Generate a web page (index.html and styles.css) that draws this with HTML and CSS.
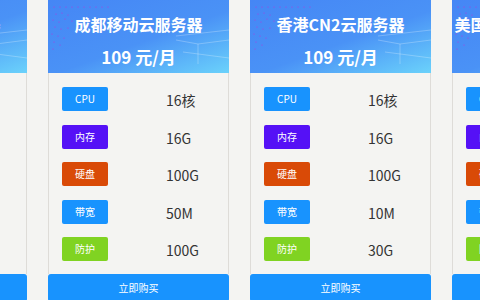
FILE: index.html
```html
<!DOCTYPE html>
<html lang="zh-CN">
<head>
    <meta charset="UTF-8">
    <meta name="viewport" content="width=device-width, initial-scale=1.0">
    <title>云服务器套餐</title>
    <link rel="stylesheet" href="styles.css">
</head>
<body>
    <div class="plans">
        <div class="plan">
            <div class="plan-head">
                <svg class="deco" width="181" height="73" viewBox="0 0 181 73">
                    <g fill="#b23be0">
                        <circle cx="6" cy="7" r="0.6"/><circle cx="12" cy="7" r="0.6"/><circle cx="18" cy="7" r="0.6"/><circle cx="24" cy="7" r="0.6"/><circle cx="30" cy="7" r="0.6"/><circle cx="36" cy="7" r="0.6"/><circle cx="42" cy="7" r="0.6"/><circle cx="48" cy="7" r="0.6"/><circle cx="54" cy="7" r="0.6"/><circle cx="60" cy="7" r="0.6"/>
                        <circle cx="8" cy="14" r="0.6"/><circle cx="14" cy="13" r="0.6"/><circle cx="20" cy="15" r="0.6"/><circle cx="5" cy="20" r="0.6"/><circle cx="11" cy="22" r="0.6"/><circle cx="17" cy="19" r="0.6"/><circle cx="24" cy="21" r="0.6"/><circle cx="7" cy="27" r="0.6"/><circle cx="13" cy="29" r="0.6"/><circle cx="20" cy="28" r="0.6"/><circle cx="4" cy="34" r="0.6"/><circle cx="10" cy="36" r="0.6"/><circle cx="16" cy="38" r="0.6"/><circle cx="6" cy="42" r="0.6"/><circle cx="12" cy="45" r="0.6"/><circle cx="5" cy="49" r="0.6"/>
                    </g>
                    <g stroke="#ffffff" stroke-opacity="0.25" stroke-width="1" fill="none">
                        <path d="M128 36 L181 30"/><path d="M128 40 L150 44 L181 40"/><path d="M135 52 L181 58"/><path d="M150 44 L150 64"/>
                    </g>
                </svg>
                <h2>西部高防云服务器</h2>
                <div class="price">99 元/月</div>
            </div>
            <div class="plan-body">
                <div class="spec"><span class="tag blue">CPU</span><span class="val">8核</span></div>
                <div class="spec"><span class="tag purple">内存</span><span class="val">8G</span></div>
                <div class="spec"><span class="tag orange">硬盘</span><span class="val">100G</span></div>
                <div class="spec"><span class="tag blue">带宽</span><span class="val">20M</span></div>
                <div class="spec"><span class="tag green">防护</span><span class="val">100G</span></div>
            </div>
            <a href="#" class="buy">立即购买</a>
        </div>

        <div class="plan">
            <div class="plan-head">
                <svg class="deco" width="181" height="73" viewBox="0 0 181 73">
                    <g fill="#b23be0">
                        <circle cx="6" cy="7" r="0.6"/><circle cx="12" cy="7" r="0.6"/><circle cx="18" cy="7" r="0.6"/><circle cx="24" cy="7" r="0.6"/><circle cx="30" cy="7" r="0.6"/><circle cx="36" cy="7" r="0.6"/><circle cx="42" cy="7" r="0.6"/><circle cx="48" cy="7" r="0.6"/><circle cx="54" cy="7" r="0.6"/><circle cx="60" cy="7" r="0.6"/>
                        <circle cx="8" cy="14" r="0.6"/><circle cx="14" cy="13" r="0.6"/><circle cx="20" cy="15" r="0.6"/><circle cx="5" cy="20" r="0.6"/><circle cx="11" cy="22" r="0.6"/><circle cx="17" cy="19" r="0.6"/><circle cx="24" cy="21" r="0.6"/><circle cx="7" cy="27" r="0.6"/><circle cx="13" cy="29" r="0.6"/><circle cx="20" cy="28" r="0.6"/><circle cx="4" cy="34" r="0.6"/><circle cx="10" cy="36" r="0.6"/><circle cx="16" cy="38" r="0.6"/><circle cx="6" cy="42" r="0.6"/><circle cx="12" cy="45" r="0.6"/><circle cx="5" cy="49" r="0.6"/>
                    </g>
                    <g stroke="#ffffff" stroke-opacity="0.25" stroke-width="1" fill="none">
                        <path d="M128 36 L181 30"/><path d="M128 40 L150 44 L181 40"/><path d="M135 52 L181 58"/><path d="M150 44 L150 64"/>
                    </g>
                </svg>
                <h2>成都移动云服务器</h2>
                <div class="price">109 元/月</div>
            </div>
            <div class="plan-body">
                <div class="spec"><span class="tag blue">CPU</span><span class="val">16核</span></div>
                <div class="spec"><span class="tag purple">内存</span><span class="val">16G</span></div>
                <div class="spec"><span class="tag orange">硬盘</span><span class="val">100G</span></div>
                <div class="spec"><span class="tag blue">带宽</span><span class="val">50M</span></div>
                <div class="spec"><span class="tag green">防护</span><span class="val">100G</span></div>
            </div>
            <a href="#" class="buy">立即购买</a>
        </div>

        <div class="plan">
            <div class="plan-head">
                <svg class="deco" width="181" height="73" viewBox="0 0 181 73">
                    <g fill="#b23be0">
                        <circle cx="6" cy="7" r="0.6"/><circle cx="12" cy="7" r="0.6"/><circle cx="18" cy="7" r="0.6"/><circle cx="24" cy="7" r="0.6"/><circle cx="30" cy="7" r="0.6"/><circle cx="36" cy="7" r="0.6"/><circle cx="42" cy="7" r="0.6"/><circle cx="48" cy="7" r="0.6"/><circle cx="54" cy="7" r="0.6"/><circle cx="60" cy="7" r="0.6"/>
                        <circle cx="8" cy="14" r="0.6"/><circle cx="14" cy="13" r="0.6"/><circle cx="20" cy="15" r="0.6"/><circle cx="5" cy="20" r="0.6"/><circle cx="11" cy="22" r="0.6"/><circle cx="17" cy="19" r="0.6"/><circle cx="24" cy="21" r="0.6"/><circle cx="7" cy="27" r="0.6"/><circle cx="13" cy="29" r="0.6"/><circle cx="20" cy="28" r="0.6"/><circle cx="4" cy="34" r="0.6"/><circle cx="10" cy="36" r="0.6"/><circle cx="16" cy="38" r="0.6"/><circle cx="6" cy="42" r="0.6"/><circle cx="12" cy="45" r="0.6"/><circle cx="5" cy="49" r="0.6"/>
                    </g>
                    <g stroke="#ffffff" stroke-opacity="0.25" stroke-width="1" fill="none">
                        <path d="M128 36 L181 30"/><path d="M128 40 L150 44 L181 40"/><path d="M135 52 L181 58"/><path d="M150 44 L150 64"/>
                    </g>
                </svg>
                <h2>香港CN2云服务器</h2>
                <div class="price">109 元/月</div>
            </div>
            <div class="plan-body">
                <div class="spec"><span class="tag blue">CPU</span><span class="val">16核</span></div>
                <div class="spec"><span class="tag purple">内存</span><span class="val">16G</span></div>
                <div class="spec"><span class="tag orange">硬盘</span><span class="val">100G</span></div>
                <div class="spec"><span class="tag blue">带宽</span><span class="val">10M</span></div>
                <div class="spec"><span class="tag green">防护</span><span class="val">30G</span></div>
            </div>
            <a href="#" class="buy">立即购买</a>
        </div>

        <div class="plan">
            <div class="plan-head">
                <svg class="deco" width="181" height="73" viewBox="0 0 181 73">
                    <g fill="#b23be0">
                        <circle cx="6" cy="7" r="0.6"/><circle cx="12" cy="7" r="0.6"/><circle cx="18" cy="7" r="0.6"/><circle cx="24" cy="7" r="0.6"/><circle cx="30" cy="7" r="0.6"/><circle cx="36" cy="7" r="0.6"/><circle cx="42" cy="7" r="0.6"/><circle cx="48" cy="7" r="0.6"/><circle cx="54" cy="7" r="0.6"/><circle cx="60" cy="7" r="0.6"/>
                        <circle cx="8" cy="14" r="0.6"/><circle cx="14" cy="13" r="0.6"/><circle cx="20" cy="15" r="0.6"/><circle cx="5" cy="20" r="0.6"/><circle cx="11" cy="22" r="0.6"/><circle cx="17" cy="19" r="0.6"/><circle cx="24" cy="21" r="0.6"/><circle cx="7" cy="27" r="0.6"/><circle cx="13" cy="29" r="0.6"/><circle cx="20" cy="28" r="0.6"/><circle cx="4" cy="34" r="0.6"/><circle cx="10" cy="36" r="0.6"/><circle cx="16" cy="38" r="0.6"/><circle cx="6" cy="42" r="0.6"/><circle cx="12" cy="45" r="0.6"/><circle cx="5" cy="49" r="0.6"/>
                    </g>
                    <g stroke="#ffffff" stroke-opacity="0.25" stroke-width="1" fill="none">
                        <path d="M128 36 L181 30"/><path d="M128 40 L150 44 L181 40"/><path d="M135 52 L181 58"/><path d="M150 44 L150 64"/>
                    </g>
                </svg>
                <h2>美国洛杉矶高防云服务器</h2>
                <div class="price">129 元/月</div>
            </div>
            <div class="plan-body">
                <div class="spec"><span class="tag blue">CPU</span><span class="val">8核</span></div>
                <div class="spec"><span class="tag purple">内存</span><span class="val">16G</span></div>
                <div class="spec"><span class="tag orange">硬盘</span><span class="val">100G</span></div>
                <div class="spec"><span class="tag blue">带宽</span><span class="val">20M</span></div>
                <div class="spec"><span class="tag green">防护</span><span class="val">50G</span></div>
            </div>
            <a href="#" class="buy">立即购买</a>
        </div>
    </div>
</body>
</html>
```

FILE: styles.css
```css
body {
    margin: 0;
    font-family: "Noto Sans CJK SC", "Noto Sans", sans-serif;
    background: #f4f4f2;
    color: #333333;
    overflow: hidden;
}

.plans {
    display: flex;
    justify-content: center;
    gap: 21px;
    padding-right: 1px;
}

.plan {
    flex: 0 0 181px;
    width: 181px;
    display: flex;
    flex-direction: column;
}

.plan-head {
    position: relative;
    height: 73px;
    padding-top: 12px;
    box-sizing: border-box;
    background: linear-gradient(160deg, #4586f5 0%, #4a92f6 55%, #6bd2fb 100%);
    color: #ffffff;
    text-align: center;
    overflow: hidden;
}

.plan-head .deco {
    position: absolute;
    top: 0;
    left: 0;
}

.plan-head h2 {
    position: relative;
    margin: 0;
    font-size: 16px;
    line-height: 24px;
    font-weight: bold;
    white-space: nowrap;
}

.plan-head .price {
    position: relative;
    margin-top: 8px;
    font-size: 17px;
    line-height: 26px;
    font-weight: bold;
}

.plan-body {
    display: flex;
    flex-direction: column;
    gap: 13.5px;
    padding: 14px 13px 13px;
    border: 1px solid #dedcd8;
    border-top: none;
    border-bottom: none;
}

.spec {
    display: flex;
    align-items: center;
    height: 24px;
}

.tag {
    width: 46px;
    height: 24px;
    line-height: 24px;
    border-radius: 2px;
    color: #ffffff;
    font-size: 10px;
    text-align: center;
}

.tag.blue {
    background: #1893fe;
}

.tag.purple {
    background: #5511f6;
}

.tag.orange {
    background: #d94a07;
}

.tag.green {
    background: #80d322;
}

.val {
    margin-left: 58px;
    margin-top: 2px;
    font-size: 14px;
    color: #333333;
}

.buy {
    display: block;
    height: 28px;
    line-height: 28px;
    background: #1893fe;
    border-radius: 3px;
    color: #ffffff;
    font-size: 10px;
    text-align: center;
    text-decoration: none;
}
```
